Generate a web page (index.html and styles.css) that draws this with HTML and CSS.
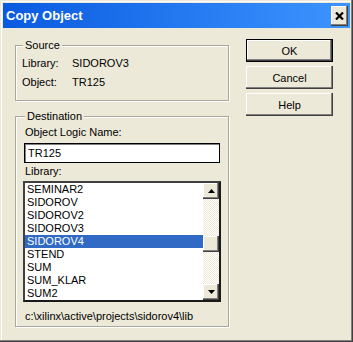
FILE: index.html
```html
<!DOCTYPE html>
<html lang="en">
<head>
    <meta charset="UTF-8">
    <meta name="viewport" content="width=device-width, initial-scale=1.0">
    <title>Copy Object</title>
    <link rel="stylesheet" href="styles.css">
</head>
<body>
    <div class="window">
        <div class="titlebar">
            <span class="title">Copy Object</span>
            <button class="close-btn">
                <svg width="9" height="8" viewBox="0 0 9 8">
                    <path d="M1 0.5L8 7.5M8 0.5L1 7.5" stroke="#000" stroke-width="2.2"/>
                </svg>
            </button>
        </div>
        <div class="content">
            <div class="left-col">
                <fieldset class="group source">
                    <legend>Source</legend>
                    <div class="row"><span class="label">Library:</span><span>SIDOROV3</span></div>
                    <div class="row"><span class="label">Object:</span><span>TR125</span></div>
                </fieldset>
                <fieldset class="group destination">
                    <legend>Destination</legend>
                    <label class="field-label" for="logic-name">Object Logic Name:</label>
                    <input type="text" id="logic-name" class="text-input" value="TR125">
                    <div class="field-label lib-label">Library:</div>
                    <div class="listbox">
                        <ul class="items">
                            <li>SEMINAR2</li>
                            <li>SIDOROV</li>
                            <li>SIDOROV2</li>
                            <li>SIDOROV3</li>
                            <li class="selected">SIDOROV4</li>
                            <li>STEND</li>
                            <li>SUM</li>
                            <li>SUM_KLAR</li>
                            <li>SUM2</li>
                        </ul>
                        <div class="scrollbar">
                            <div class="scroll-btn">
                                <svg width="7" height="4" viewBox="0 0 7 4"><path d="M3.5 0L7 4H0z" fill="#000"/></svg>
                            </div>
                            <div class="track">
                                <div class="thumb"></div>
                            </div>
                            <div class="scroll-btn">
                                <svg width="7" height="4" viewBox="0 0 7 4"><path d="M0 0h7L3.5 4z" fill="#000"/></svg>
                            </div>
                        </div>
                    </div>
                    <div class="path">c:\xilinx\active\projects\sidorov4\lib</div>
                </fieldset>
            </div>
            <div class="buttons">
                <button class="btn default">OK</button>
                <button class="btn">Cancel</button>
                <button class="btn">Help</button>
            </div>
        </div>
    </div>
</body>
</html>
```
FILE: styles.css
```css
* {
    box-sizing: border-box;
}
body {
    margin: 0;
    font-family: "Liberation Sans", Arial, sans-serif;
    font-size: 11px;
    color: #000;
}
.window {
    width: 353px;
    height: 342px;
    padding: 3px;
    background-color: #ECE9D8;
    box-shadow: inset -1px -1px 0 #404040, inset -2px -2px 0 #808080, inset 1px 1px 0 #ECE9D8, inset 2px 2px 0 #fff;
}
.titlebar {
    height: 25px;
    display: flex;
    align-items: center;
    justify-content: space-between;
    padding: 0 2px 0 3px;
    background: linear-gradient(to right, #0A5AE0, #3D95FF);
}
.title {
    color: #fff;
    font-weight: bold;
    font-size: 13px;
}
.close-btn {
    width: 17px;
    height: 20px;
    padding: 0;
    display: flex;
    align-items: center;
    justify-content: center;
    background-color: #ECE9D8;
    border: none;
    box-shadow: inset -1px -1px 0 #404040, inset -2px -2px 0 #808080, inset 1px 1px 0 #fff;
}
.content {
    display: flex;
    gap: 17px;
    padding: 11px 0 0 12px;
}
.left-col {
    width: 214px;
}
.group {
    margin: 0;
    padding: 2px 6px 8px;
    border: 1px solid #ACA899;
    box-shadow: inset 1px 1px 0 #fff, 1px 1px 0 #fff;
}
.group legend {
    padding: 0 2px;
    margin-left: 1px;
    line-height: 13px;
    background-color: #ECE9D8;
}
.row {
    display: flex;
    line-height: 19px;
}
.label {
    width: 50px;
}
.destination {
    margin-top: 9px;
    padding: 3px 6px 3px 8px;
}
.field-label {
    display: block;
    line-height: 13px;
    margin-left: 1px;
}
.text-input {
    display: block;
    width: 196px;
    height: 20px;
    margin-top: 4px;
    padding: 0 3px;
    font-family: inherit;
    font-size: 11px;
    border: 1px solid #000;
    box-shadow: inset 1px 1px 0 #808080;
    outline: none;
}
.lib-label {
    margin-top: 2px;
}
.listbox {
    display: flex;
    width: 198px;
    margin: 3px 0 0 -1px;
    background-color: #fff;
    border: 2px solid;
    border-color: #404040 #1a1a1a #1a1a1a #404040;
}
.items {
    flex: 1;
    list-style: none;
    margin: 0;
    padding: 0;
}
.items li {
    height: 13px;
    line-height: 13px;
    padding-left: 2px;
}
.items li.selected {
    background-color: #316AC5;
    color: #fff;
}
.scrollbar {
    width: 16px;
    display: flex;
    flex-direction: column;
}
.scroll-btn {
    width: 16px;
    height: 16px;
    display: flex;
    align-items: center;
    justify-content: center;
    background-color: #ECE9D8;
    box-shadow: inset -1px -1px 0 #404040, inset -2px -2px 0 #808080, inset 1px 1px 0 #fff;
}
.track {
    flex: 1;
    padding-top: 37px;
    background: repeating-conic-gradient(#fff 0 25%, #ECE9D8 0 50%) 0 0 / 2px 2px;
}
.thumb {
    height: 16px;
    background-color: #ECE9D8;
    box-shadow: inset -1px -1px 0 #404040, inset -2px -2px 0 #808080, inset 1px 1px 0 #fff;
}
.path {
    margin: 8px 0 0 1px;
    line-height: 13px;
}
.buttons {
    display: flex;
    flex-direction: column;
    gap: 4px;
}
.btn {
    width: 87px;
    height: 23px;
    padding: 0;
    font-family: inherit;
    font-size: 11px;
    background-color: #ECE9D8;
    border: none;
    box-shadow: inset -1px -1px 0 #404040, inset -2px -2px 0 #808080, inset 1px 1px 0 #fff;
}
.btn.default {
    border: 1px solid #000;
    box-shadow: inset -1px -1px 0 #404040, inset -2px -2px 0 #808080, inset 1px 1px 0 #fff;
}
```
